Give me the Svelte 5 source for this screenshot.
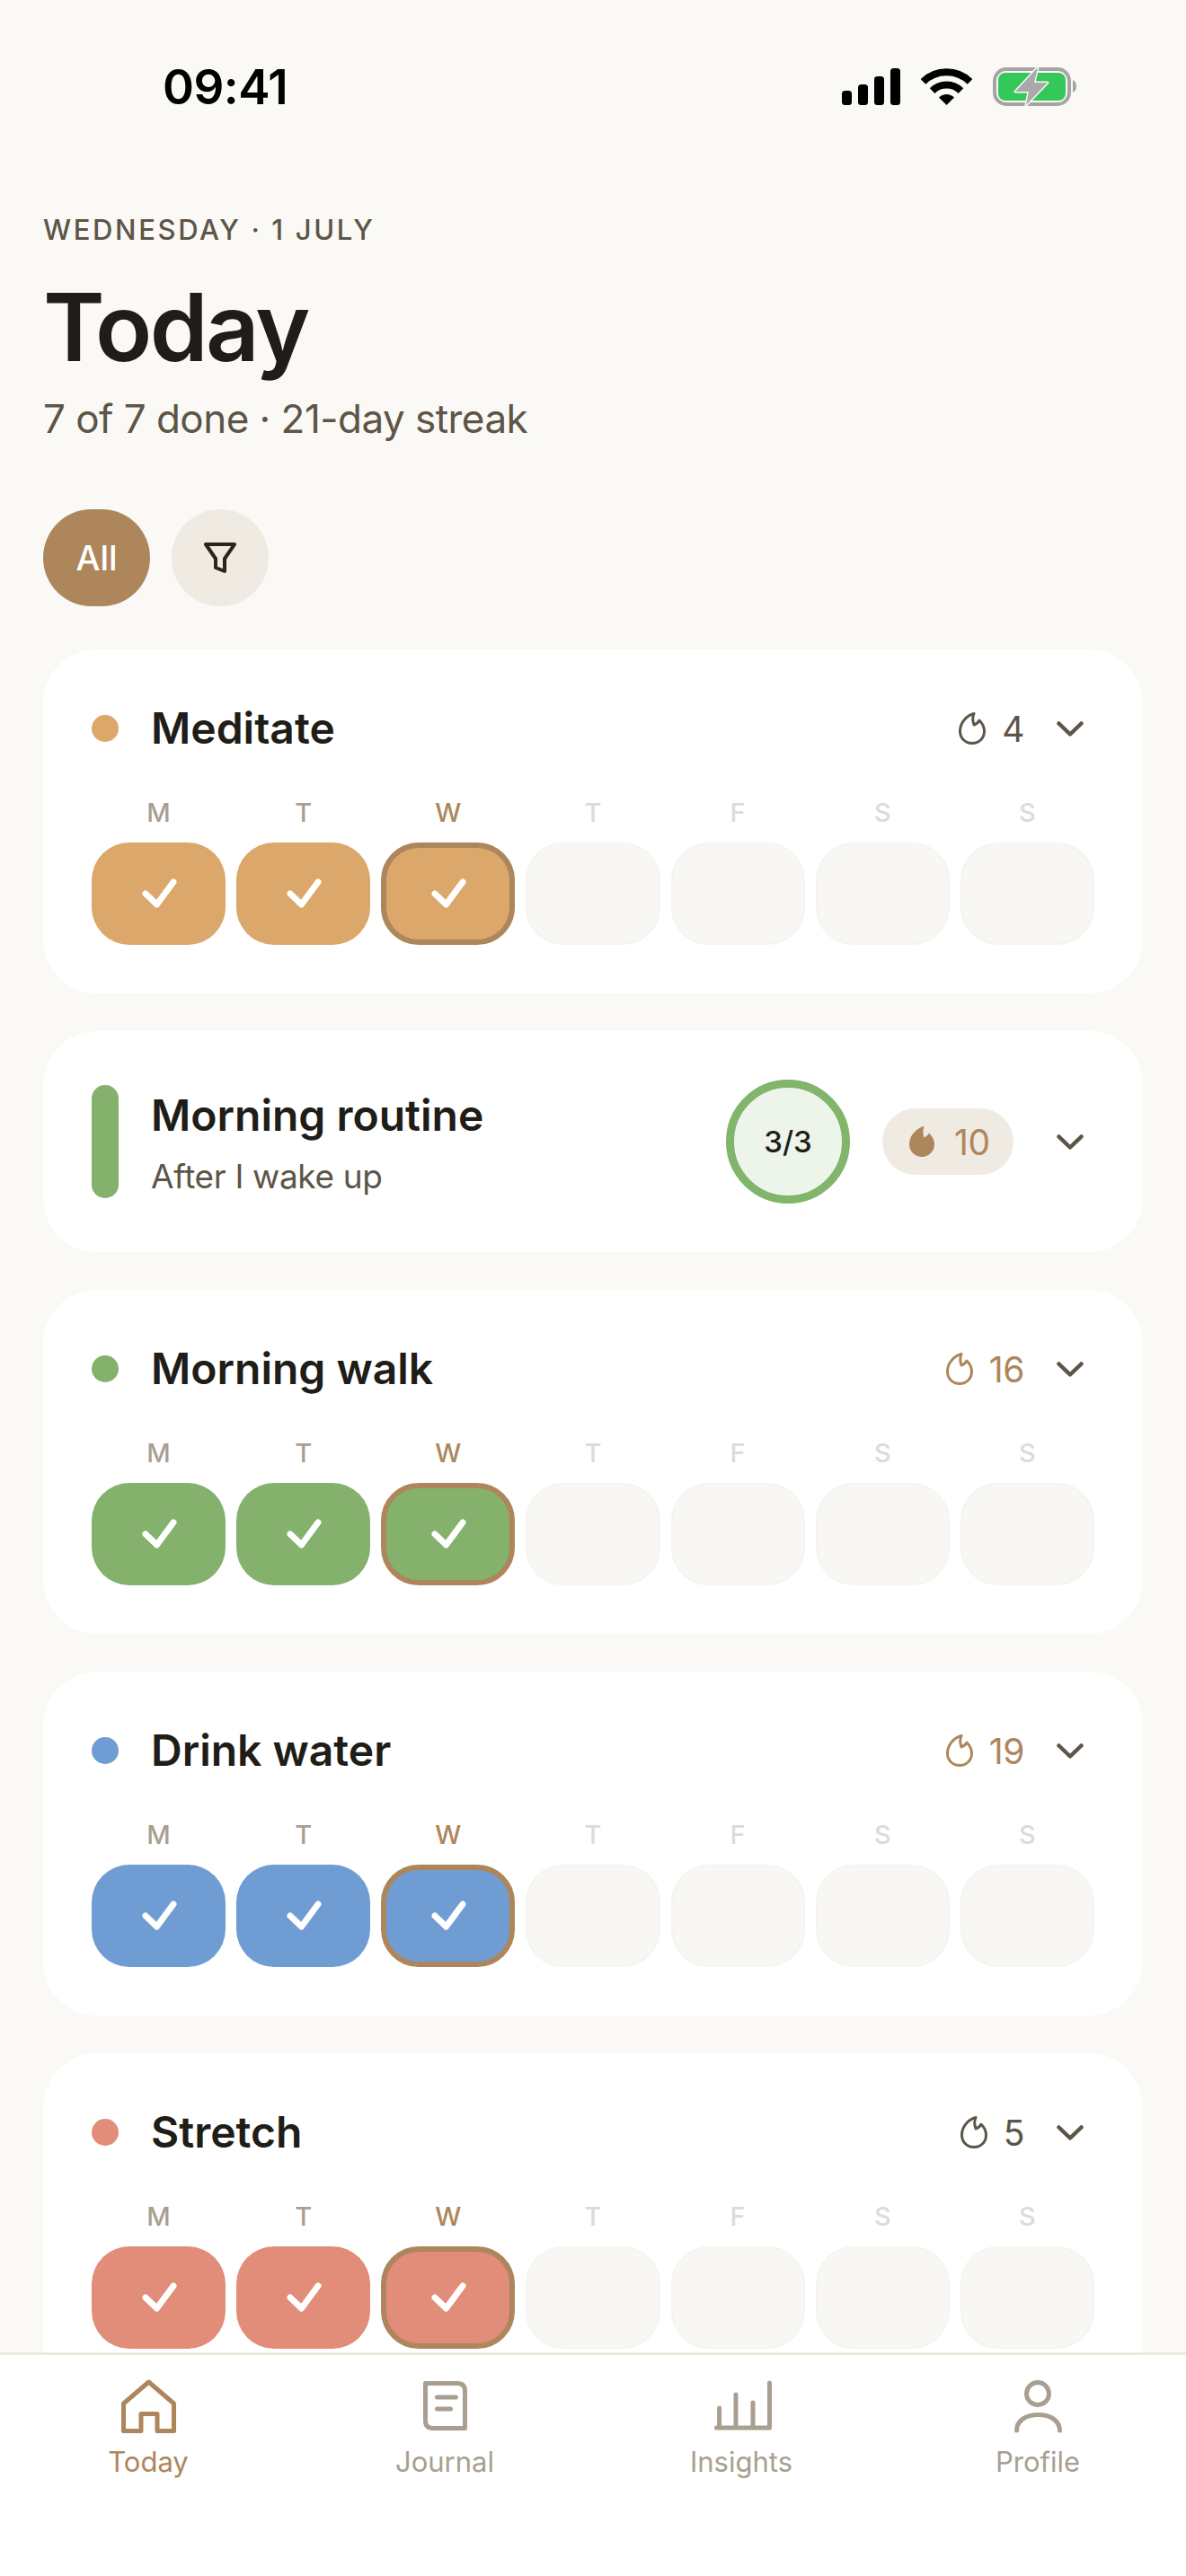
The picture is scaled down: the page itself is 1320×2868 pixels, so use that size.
<script>
  const days = ['M', 'T', 'W', 'T', 'F', 'S', 'S'];

  const habits = [
    { name: 'Meditate', color: '#dba76b', streak: 4, hot: false },
    { name: 'Morning routine', color: '#84b26d', group: true, sub: 'After I wake up', streak: 10, hot: true },
    { name: 'Morning walk', color: '#84b26d', streak: 16, hot: true },
    { name: 'Drink water', color: '#6f9dd3', streak: 19, hot: true },
    { name: 'Stretch', color: '#e28d79', streak: 5, hot: false }
  ];

  const flame = 'M17 1.5C8 4 1.5 12 1.5 21C1.5 29 7.5 34.5 15 34.5C22.5 34.5 28.5 29 28.5 21C28.5 16.5 26.5 12.5 23 9C22 11 20 13 17 14C15.5 10 15.5 5 17 1.5Z';

  const tabs = ['Today', 'Journal', 'Insights', 'Profile'];
</script>

<div class="phone">
  <div class="status">
    <span class="time">09:41</span>
    <div class="status-icons">
      <svg width="65" height="41" viewBox="0 0 65 41" fill="#000">
        <rect x="0" y="25" width="11" height="16" rx="3.5" />
        <rect x="18" y="18" width="11" height="23" rx="3.5" />
        <rect x="36" y="9" width="11" height="32" rx="3.5" />
        <rect x="54" y="0" width="11" height="41" rx="3.5" />
      </svg>
      <svg width="57" height="41" viewBox="0 0 57 41">
        <path d="M2.5 15A37 37 0 0 1 54.5 15" fill="none" stroke="#000" stroke-width="8" />
        <path d="M12.6 25.1A22.5 22.5 0 0 1 44.4 25.1" fill="none" stroke="#000" stroke-width="8" />
        <path d="M28.5 41L20 32.5A12 12 0 0 1 37 32.5Z" fill="#000" />
      </svg>
      <svg class="battery" width="93" height="44" viewBox="0 0 93 44">
        <rect x="2" y="3" width="83" height="39" rx="13" fill="none" stroke="#a5a5a5" stroke-width="4" />
        <rect x="6" y="7" width="75" height="31" rx="8" fill="#34c759" />
        <path d="M89 15C91.5 16 93 18.5 93 22C93 25.5 91.5 28 89 29Z" fill="#a5a5a5" />
        <path d="M50 1L25 28H40L37 43L61 18H46Z" fill="#a9a9a9" stroke="#faf9f5" stroke-width="3" stroke-linejoin="round" paint-order="stroke" />
      </svg>
    </div>
  </div>

  <main class="content">
    <p class="eyebrow">WEDNESDAY · 1 JULY</p>
    <h1>Today</h1>
    <p class="summary">7 of 7 done · 21-day streak</p>

    <div class="filters">
      <button class="chip active">All</button>
      <button class="chip round" aria-label="Filter">
        <svg width="40" height="36" viewBox="0 0 40 36" fill="none" stroke="#2a261d" stroke-width="4" stroke-linejoin="round">
          <path d="M4 3H36L25 19V33L15 29V19Z" />
        </svg>
      </button>
    </div>

    {#each habits as habit}
      {#if habit.group}
        <section class="card group">
          <span class="bar" style="background: {habit.color}"></span>
          <div class="group-text">
            <h2>{habit.name}</h2>
            <p>{habit.sub}</p>
          </div>
          <div class="ring">3/3</div>
          <div class="pill">
            <svg width="30" height="36" viewBox="0 0 30 36"><path d={flame} fill="#ad865c" stroke="#ad865c" /></svg>
            <span>{habit.streak}</span>
          </div>
          <svg class="chevron" width="30" height="17" viewBox="0 0 30 17" fill="none" stroke="#5c5548" stroke-width="4.5" stroke-linecap="round" stroke-linejoin="round">
            <path d="M2.5 2.5L15 14.5L27.5 2.5" />
          </svg>
        </section>
      {:else}
        <section class="card">
          <div class="head">
            <span class="dot" style="background: {habit.color}"></span>
            <h2>{habit.name}</h2>
            <div class="streak" class:hot={habit.hot}>
              <svg width="30" height="36" viewBox="0 0 30 36"><path d={flame} fill="none" stroke="currentColor" stroke-width="3" stroke-linejoin="round" /></svg>
              <span>{habit.streak}</span>
            </div>
            <svg class="chevron" width="30" height="17" viewBox="0 0 30 17" fill="none" stroke="#5c5548" stroke-width="4.5" stroke-linecap="round" stroke-linejoin="round">
              <path d="M2.5 2.5L15 14.5L27.5 2.5" />
            </svg>
          </div>
          <div class="week">
            {#each days as day, i}
              <div class="day">
                <span class="letter" class:past={i < 2} class:today={i === 2}>{day}</span>
                {#if i < 3}
                  <div class="cell" class:current={i === 2} style="background: {habit.color}">
                    <svg width="42" height="36" viewBox="0 0 42 36" fill="none" stroke="#fff" stroke-width="7" stroke-linecap="round" stroke-linejoin="round">
                      <path d="M6 18L18.5 30L37 5" />
                    </svg>
                  </div>
                {:else}
                  <div class="cell empty"></div>
                {/if}
              </div>
            {/each}
          </div>
        </section>
      {/if}
    {/each}
  </main>

  <nav class="tabs">
    {#each tabs as tab, i}
      <div class="tab" class:on={i === 0}>
        <svg width="72" height="72" viewBox="0 0 72 72" fill="none" stroke="currentColor" stroke-width="5" stroke-linecap="round" stroke-linejoin="round">
          {#if i === 0}
            <path d="M8.5 33L36.5 9L64.5 33V63.5H46V44.5H28V63.5H8.5Z" />
          {:else if i === 1}
            <path d="M14.5 10.5H50Q58.5 10.5 58.5 19V60.5H23Q14.5 60.5 14.5 52Z" />
            <path d="M27.5 26H48.5M27.5 39H42.5" />
          {:else if i === 2}
            <path d="M8.5 60H67.5V10M11.6 60V38M30 60V23M49 60V32" />
          {:else}
            <circle cx="36" cy="22" r="12.5" />
            <path d="M12.5 63C12.5 52 23 45.5 36.5 45.5C50 45.5 60.5 52 60.5 63" />
          {/if}
        </svg>
        <span>{tab}</span>
      </div>
    {/each}
  </nav>
</div>

<style>
  :global(body) {
    margin: 0;
    background: #faf9f5;
  }

  .phone {
    width: 1320px;
    height: 2868px;
    display: flex;
    flex-direction: column;
    overflow: hidden;
    background: #faf9f5;
    font-family: Inter, "Liberation Sans", sans-serif;
    color: #1f1d18;
  }

  .status {
    flex: none;
    height: 180px;
    box-sizing: border-box;
    padding: 64px 122px 0 181px;
    display: flex;
    justify-content: space-between;
    align-items: flex-start;
  }

  .time {
    font-size: 53px;
    font-weight: 600;
    line-height: 66px;
    letter-spacing: -0.01em;
    color: #000;
  }

  .status-icons {
    display: flex;
    align-items: flex-start;
    gap: 23px;
    padding-top: 12px;
  }

  .battery {
    margin-top: -2px;
  }

  .content {
    flex: 1;
    min-height: 0;
    overflow: hidden;
    padding: 54px 48px 0;
  }

  .eyebrow {
    margin: 0;
    font-size: 31px;
    line-height: 44px;
    font-weight: 500;
    letter-spacing: 0.085em;
    color: #5c5548;
  }

  h1 {
    margin: 26px 0 0;
    font-size: 104px;
    line-height: 120px;
    font-weight: 600;
    letter-spacing: -0.025em;
  }

  .summary {
    margin: 12px 0 0;
    font-size: 44px;
    line-height: 60px;
    letter-spacing: -0.012em;
    color: #5c5548;
  }

  .filters {
    display: flex;
    gap: 24px;
    margin: 71px 0 48px;
  }

  .chip {
    height: 108px;
    border: none;
    border-radius: 54px;
    padding: 0;
    font-family: inherit;
    display: flex;
    align-items: center;
    justify-content: center;
  }

  .active {
    width: 119px;
    background: #ad865c;
    color: #fff;
    font-size: 38px;
    font-weight: 500;
  }

  .round {
    width: 108px;
    background: #f0ebe2;
  }

  .card {
    background: #fff;
    border-radius: 60px;
    padding: 54px;
    margin-bottom: 42px;
  }

  .head {
    height: 68px;
    display: flex;
    align-items: center;
    margin-bottom: 42px;
  }

  .dot {
    flex: none;
    width: 30px;
    height: 30px;
    border-radius: 50%;
    margin-right: 36px;
  }

  h2 {
    margin: 0;
    font-size: 48px;
    line-height: 60px;
    font-weight: 600;
    color: #1f1d18;
  }

  .head h2 {
    flex: 1;
  }

  .streak {
    display: flex;
    align-items: center;
    gap: 18px;
    font-size: 39px;
    letter-spacing: -0.01em;
    color: #5c5548;
  }

  .streak.hot {
    color: #ad865c;
  }

  .chevron {
    flex: none;
    margin: 0 12px 0 36px;
  }

  .week {
    display: grid;
    grid-template-columns: repeat(7, 1fr);
    gap: 12px;
  }

  .day {
    min-width: 0;
    text-align: center;
  }

  .letter {
    display: block;
    height: 36px;
    line-height: 36px;
    font-size: 29px;
    font-weight: 500;
    margin-bottom: 15px;
    color: #dedbd4;
  }

  .letter.past {
    color: #a89f91;
  }

  .letter.today {
    color: #ad865c;
  }

  .cell {
    box-sizing: border-box;
    height: 114px;
    border-radius: 42px;
    display: flex;
    align-items: center;
    justify-content: center;
  }

  .cell.current {
    border: 6px solid #ad865c;
  }

  .cell.empty {
    background: #f8f7f3;
    border: 2px solid #f5f4f0;
  }

  .group {
    display: flex;
    align-items: center;
  }

  .bar {
    flex: none;
    width: 30px;
    height: 126px;
    border-radius: 15px;
    margin-right: 36px;
  }

  .group-text {
    flex: 1;
    padding-top: 4px;
  }

  .group-text p {
    margin: 13px 0 0;
    font-size: 37px;
    line-height: 50px;
    letter-spacing: -0.01em;
    color: #5c5548;
  }

  .ring {
    box-sizing: border-box;
    width: 138px;
    height: 138px;
    border-radius: 50%;
    border: 9px solid #80b56b;
    background: #edf4ea;
    display: flex;
    align-items: center;
    justify-content: center;
    font-size: 33px;
    font-weight: 500;
  }

  .pill {
    height: 74px;
    width: 146px;
    box-sizing: border-box;
    margin-left: 36px;
    padding-left: 29px;
    border-radius: 37px;
    background: #f0ebe2;
    display: flex;
    align-items: center;
    gap: 21px;
    font-size: 39px;
    letter-spacing: -0.01em;
    color: #ad865c;
  }

  .pill + .chevron {
    margin-left: 48px;
  }

  .tabs {
    flex: none;
    height: 249px;
    box-sizing: border-box;
    border-top: 3px solid #eee8df;
    padding-top: 21px;
    background: #fff;
    display: grid;
    grid-template-columns: repeat(4, 1fr);
  }

  .tab {
    display: flex;
    flex-direction: column;
    align-items: center;
    color: #a89f91;
    font-size: 31px;
    line-height: 44px;
    font-weight: 400;
  }

  .tab svg {
    margin-bottom: 4px;
  }

  .tab.on {
    color: #ad865c;
  }
</style>
